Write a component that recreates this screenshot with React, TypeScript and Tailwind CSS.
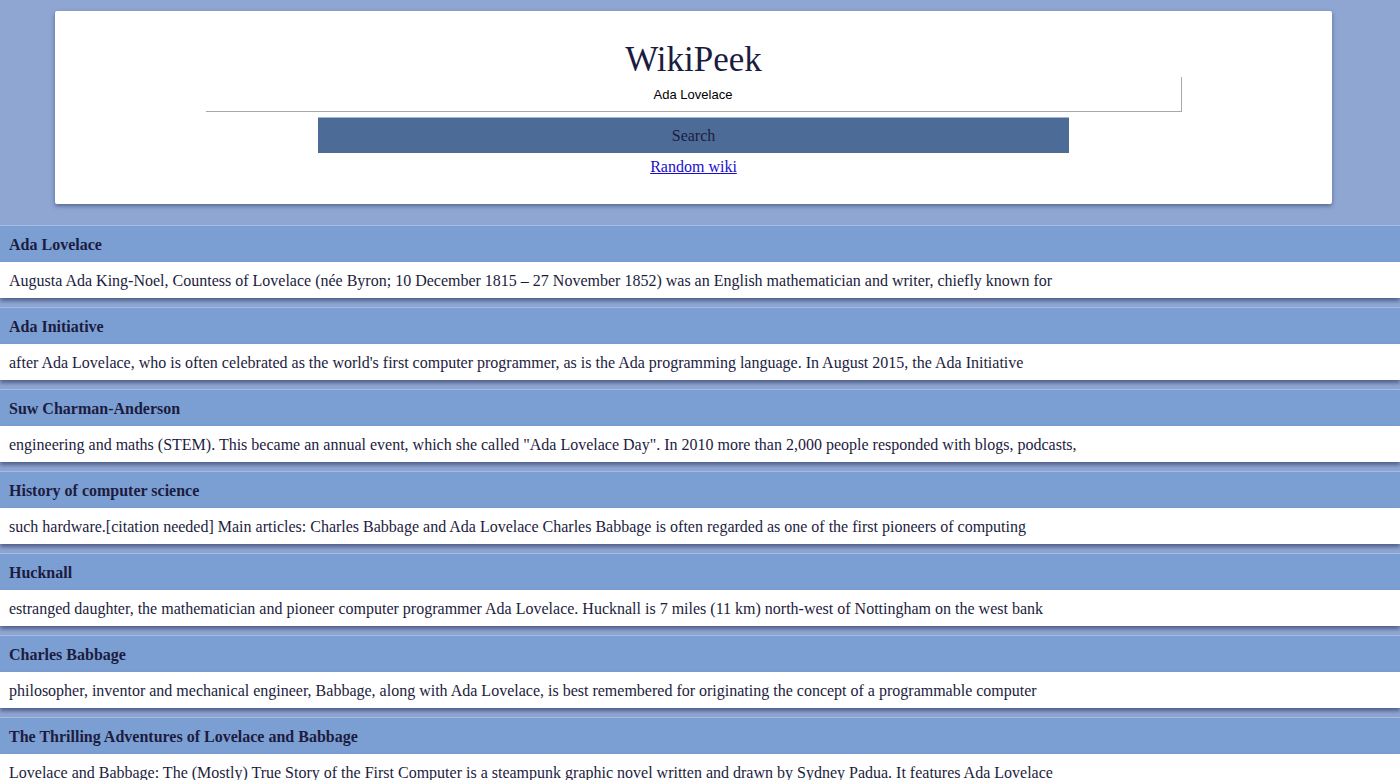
import React from "react";

const results = [
  {
    title: "Ada Lovelace",
    text: "Augusta Ada King-Noel, Countess of Lovelace (née Byron; 10 December 1815 – 27 November 1852) was an English mathematician and writer, chiefly known for",
  },
  {
    title: "Ada Initiative",
    text: "after Ada Lovelace, who is often celebrated as the world's first computer programmer, as is the Ada programming language. In August 2015, the Ada Initiative",
  },
  {
    title: "Suw Charman-Anderson",
    text: 'engineering and maths (STEM). This became an annual event, which she called "Ada Lovelace Day". In 2010 more than 2,000 people responded with blogs, podcasts,',
  },
  {
    title: "History of computer science",
    text: "such hardware.[citation needed] Main articles: Charles Babbage and Ada Lovelace Charles Babbage is often regarded as one of the first pioneers of computing",
  },
  {
    title: "Hucknall",
    text: "estranged daughter, the mathematician and pioneer computer programmer Ada Lovelace. Hucknall is 7 miles (11 km) north-west of Nottingham on the west bank",
  },
  {
    title: "Charles Babbage",
    text: "philosopher, inventor and mechanical engineer, Babbage, along with Ada Lovelace, is best remembered for originating the concept of a programmable computer",
  },
  {
    title: "The Thrilling Adventures of Lovelace and Babbage",
    text: "Lovelace and Babbage: The (Mostly) True Story of the First Computer is a steampunk graphic novel written and drawn by Sydney Padua. It features Ada Lovelace",
  },
];

export default function App() {
  return (
    <div
      className="h-[780px] overflow-hidden w-full bg-[#8fa6d3] text-[#1c1c40]"
      style={{ fontFamily: '"Liberation Serif", "Times New Roman", serif' }}
    >
      <div className="pt-[11px] pb-[21px]">
        <div className="ml-[55px] w-[1277px] h-[193px] bg-white rounded-[2px] shadow-[0_2px_4px_rgba(40,50,90,0.55)] flex flex-col items-center">
          <h1 className="mt-[29px] text-[35px] leading-[40px] text-[#1c1c40] font-normal">
            WikiPeek
          </h1>
          <div
            className="mt-[-3px] w-[976px] h-[35px] pt-[2px] border-b border-r border-[#a9a9a9] flex items-center justify-center text-[13px] text-black"
            style={{ fontFamily: '"Liberation Sans", Arial, sans-serif' }}
          >
            Ada Lovelace
          </div>
          <button className="mt-[5px] w-[751px] h-[36px] bg-[#4d6b97] border-t border-[#9fb3d6] text-[16px] text-[#1c1c40] flex items-center justify-center">
            Search
          </button>
          <a className="mt-[4px] text-[16px] leading-[20px] text-[#1a0dcc] underline cursor-pointer">
            Random wiki
          </a>
        </div>
      </div>
      <div className="flex flex-col">
        {results.map((r, i) => (
          <div key={i} className="mb-[9px]">
            <div className="h-[37px] pt-[2px] bg-[#7b9fd3] border-t border-[#a5bbe3] flex items-center px-[9px] font-bold text-[16px]">
              {r.title}
            </div>
            <div className="h-[36px] pt-[2px] bg-white flex items-center px-[9px] text-[16px] shadow-[0_3px_4px_rgba(40,50,90,0.6)]">
              {r.text}
            </div>
          </div>
        ))}
      </div>
    </div>
  );
}
